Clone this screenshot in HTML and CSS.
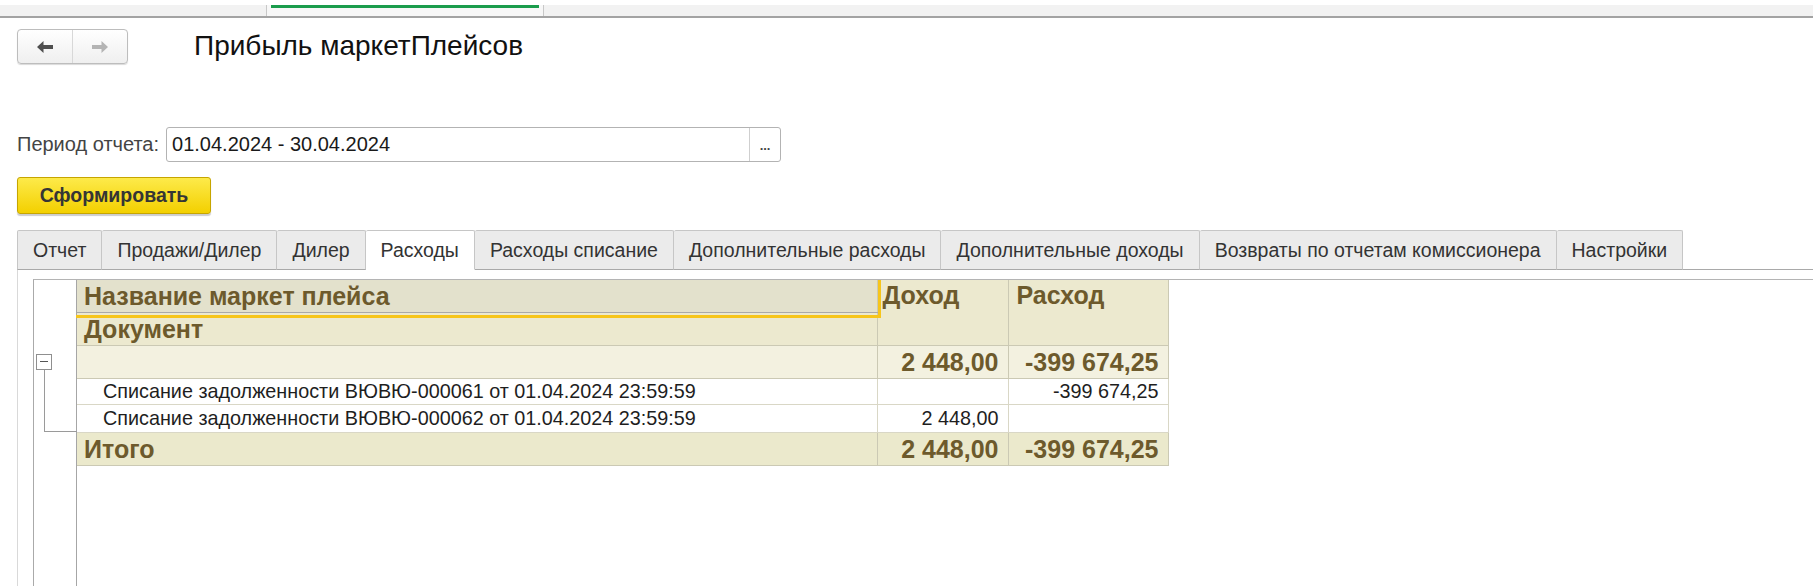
FILE: index.html
```html
<!DOCTYPE html>
<html lang="ru">
<head>
  <meta charset="UTF-8">
  <title>Прибыль маркетПлейсов</title>
  <link rel="stylesheet" href="styles.css">
</head>
<body>
  <div class="topbar">
    <div class="topbar-tab"><div class="topbar-line"></div></div>
  </div>

  <div class="page">
    <div class="head">
      <div class="nav">
        <span class="nav-btn">
          <svg width="16" height="12" viewBox="0 0 16 12"><path d="M0 6 L6.5 0 L6.5 4 L16 4 L16 8 L6.5 8 L6.5 12 Z" fill="#4f4f4f"/></svg>
        </span>
        <span class="nav-btn">
          <svg width="16" height="12" viewBox="0 0 16 12"><path d="M16 6 L9.5 0 L9.5 4 L0 4 L0 8 L9.5 8 L9.5 12 Z" fill="#b4b4b4"/></svg>
        </span>
      </div>
      <h1 class="title">Прибыль маркетПлейсов</h1>
    </div>

    <div class="period">
      <label class="period-label">Период отчета:</label>
      <div class="field">
        <span class="field-value">01.04.2024 - 30.04.2024</span>
        <span class="field-btn">...</span>
      </div>
    </div>

    <button class="generate">Сформировать</button>

    <div class="tabs">
      <div class="tab">Отчет</div>
      <div class="tab">Продажи/Дилер</div>
      <div class="tab">Дилер</div>
      <div class="tab active">Расходы</div>
      <div class="tab">Расходы списание</div>
      <div class="tab">Дополнительные расходы</div>
      <div class="tab">Дополнительные доходы</div>
      <div class="tab">Возвраты по отчетам комиссионера</div>
      <div class="tab">Настройки</div>
    </div>

    <div class="panel">
      <div class="sheet">
        <div class="group-col">
          <div class="tree">
            <div class="toggle"></div>
            <div class="tree-line"></div>
          </div>
        </div>

        <table class="report">
          <colgroup>
            <col class="c-name">
            <col class="c-in">
            <col class="c-out">
          </colgroup>
          <tr class="r-head">
            <td class="hdr selected">Название маркет плейса</td>
            <td class="hdr top" rowspan="2">Доход</td>
            <td class="hdr top out" rowspan="2">Расход</td>
          </tr>
          <tr class="r-head">
            <td class="hdr">Документ</td>
          </tr>
          <tr class="r-group">
            <td></td>
            <td class="num">2 448,00</td>
            <td class="num">-399 674,25</td>
          </tr>
          <tr class="r-doc">
            <td class="doc">Списание задолженности ВЮВЮ-000061 от 01.04.2024 23:59:59</td>
            <td class="num"></td>
            <td class="num">-399 674,25</td>
          </tr>
          <tr class="r-doc last">
            <td class="doc">Списание задолженности ВЮВЮ-000062 от 01.04.2024 23:59:59</td>
            <td class="num">2 448,00</td>
            <td class="num"></td>
          </tr>
          <tr class="r-total">
            <td class="hdr">Итого</td>
            <td class="num">2 448,00</td>
            <td class="num">-399 674,25</td>
          </tr>
        </table>
      </div>
    </div>
  </div>
</body>
</html>
```

FILE: styles.css
```css
body {
  margin: 0;
  font-family: "Liberation Sans", Arial, sans-serif;
  font-size: 20px;
  color: #333;
  background: #fff;
  overflow: hidden;
}

/* верхняя полоса с открытыми окнами */
.topbar {
  height: 11px;
  background: #f2f2f2;
  border-bottom: 2px solid #a3a3a3;
}
.topbar-tab {
  margin-left: 266px;
  width: 276px;
  height: 11px;
  border-left: 1px solid #c8c8c8;
  border-right: 1px solid #c8c8c8;
  background: #f7f7f7;
}
.topbar-line {
  margin: 5px 4px 0;
  height: 3px;
  background: #1a9c4c;
}

.page {
  padding-left: 17px;
}

.head {
  display: flex;
  align-items: center;
  margin-top: 11px;
  height: 35px;
}
.nav {
  display: flex;
  width: 111px;
  height: 35px;
  box-sizing: border-box;
  border: 1px solid #bdbdbd;
  border-radius: 4px;
  background: linear-gradient(#ffffff, #efefef);
  box-shadow: 0 1px 1px rgba(0, 0, 0, 0.15);
}
.nav-btn {
  flex: 1;
  display: flex;
  align-items: center;
  justify-content: center;
}
.nav-btn + .nav-btn {
  border-left: 1px solid #d8d8d8;
}
.title {
  margin: -2px 0 0 66px;
  font-size: 28px;
  font-weight: normal;
  color: #111;
}

.period {
  display: flex;
  align-items: center;
  margin-top: 63px;
}
.period-label {
  margin: 0 7px 0 0;
  color: #444;
}
.field {
  display: flex;
  width: 615px;
  height: 35px;
  box-sizing: border-box;
  border: 1px solid #b3b3b3;
  border-radius: 3px;
}
.field-value {
  flex: 1;
  padding-left: 5px;
  line-height: 33px;
  color: #1a1a1a;
}
.field-btn {
  width: 30px;
  border-left: 1px solid #cfcfcf;
  text-align: center;
  font-size: 13px;
  font-weight: bold;
  line-height: 36px;
  color: #444;
}

.generate {
  display: block;
  margin-top: 15px;
  width: 194px;
  height: 37px;
  border: 1px solid #c6a500;
  border-radius: 3px;
  background: linear-gradient(#fdea4a, #f3d000);
  box-shadow: 0 2px 1px rgba(0, 0, 0, 0.2);
  font-family: inherit;
  font-size: 19.5px;
  font-weight: bold;
  color: #353535;
  cursor: pointer;
}

.tabs {
  display: flex;
  margin-top: 16px;
  border-bottom: 1px solid #a9a9a9;
  font-size: 19.5px;
}
.tab {
  margin-bottom: -1px;
  padding: 0 15px;
  line-height: 38px;
  border: 1px solid #c6c6c6;
  border-left: none;
  border-bottom-color: #a9a9a9;
  border-radius: 2px 2px 0 0;
  background: #ebebeb;
  color: #333;
}
.tab:first-child {
  border-left: 1px solid #c6c6c6;
}
.tab.active {
  background: #fff;
  border-bottom-color: #fff;
}

.panel {
  height: 320px;
  padding: 9px 0 0 15px;
  border-left: 1px solid #d9d9d9;
}
.sheet {
  display: flex;
  height: 100%;
  border-top: 1px solid #b4b4b4;
  border-left: 1px solid #aaaaaa;
}
.group-col {
  flex: none;
  width: 42px;
  border-right: 1px solid #a6a6a6;
}
.tree {
  margin: 74px 0 0 2px;
}
.toggle {
  position: relative;
  width: 14px;
  height: 14px;
  border: 1px solid #8f8f8f;
  background: #fff;
}
.toggle::before {
  content: "";
  position: absolute;
  left: 3px;
  right: 3px;
  top: 6px;
  height: 1px;
  background: #555;
}
.tree-line {
  margin-left: 8px;
  width: 32px;
  height: 61px;
  border-left: 1px solid #9a9a9a;
  border-bottom: 1px solid #9a9a9a;
}

/* табличный документ отчета */
.report {
  flex: none;
  align-self: flex-start;
  table-layout: fixed;
  width: 1091px;
  border-collapse: collapse;
  border-right: 1px solid #a3a3a3;
  border-bottom: 1px solid #a3a3a3;
}
.c-name { width: 800px; }
.c-in { width: 131px; }
.c-out { width: 160px; }
.report td {
  padding: 0 9px 0 7px;
  border: 1px solid #cbc9b4;
  border-top: none;
  white-space: nowrap;
}
.report td:first-child {
  border-left: none;
}
.hdr {
  font-size: 25px;
  font-weight: bold;
  color: #6d5a2c;
  background: #ece9cf;
}
.hdr.top {
  vertical-align: top;
  padding-top: 1px;
  padding-left: 5px;
}
.hdr.out {
  padding-left: 8px;
}
.hdr.selected {
  position: relative;
  background: #e3e1cc;
  border-bottom-color: #a9a9a9;
}
.hdr.selected::after {
  content: "";
  position: absolute;
  left: -1px;
  right: -4px;
  top: 0;
  bottom: -6px;
  border-right: 3px solid #f6c51b;
  border-bottom: 3px solid #f6c51b;
  z-index: 1;
}
.r-head td { height: 32px; }
.r-group td {
  height: 32px;
  background: #f3f1e0;
}
.r-doc td {
  height: 25px;
  font-size: 19.8px;
  color: #1e1e1e;
  border-color: #d9d7c6;
}
.r-doc.last td { height: 27px; }
.r-total td {
  height: 32px;
  background: #ebe9cc;
  border-top: 1px solid #cbc9b4;
}
.num {
  text-align: right;
}
.r-group .num,
.r-total .num {
  font-size: 25px;
  font-weight: bold;
  color: #6d5a2c;
}
.doc {
  padding-left: 26px !important;
}
```
